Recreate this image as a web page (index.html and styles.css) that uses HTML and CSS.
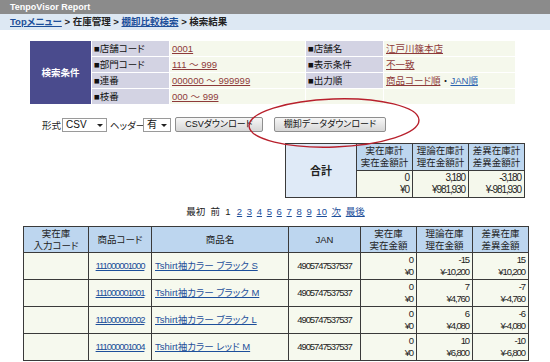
FILE: index.html
```html
<!DOCTYPE html>
<html lang="ja">
<head>
    <meta charset="UTF-8">
    <title>TenpoVisor Report</title>
    <link rel="stylesheet" href="styles.css">
</head>
<body>
    <div class="titlebar">TenpoVisor Report</div>
    <div class="crumbs">
        <a href="#">Topメニュー</a> &gt; 在庫管理 &gt; <a href="#">棚卸比較検索</a> &gt; 検索結果
    </div>

    <table class="cond">
        <tr>
            <th class="cond-head" rowspan="4">検索条件</th>
            <td class="cond-label">■店舗コード</td>
            <td class="cond-value"><a href="#">0001</a></td>
            <td class="cond-label">■店舗名</td>
            <td class="cond-value"><a href="#">江戸川篠本店</a></td>
        </tr>
        <tr>
            <td class="cond-label">■部門コード</td>
            <td class="cond-value"><a href="#">111 ～ 999</a></td>
            <td class="cond-label">■表示条件</td>
            <td class="cond-value"><a href="#">不一致</a></td>
        </tr>
        <tr>
            <td class="cond-label">■連番</td>
            <td class="cond-value"><a href="#">000000 ～ 999999</a></td>
            <td class="cond-label">■出力順</td>
            <td class="cond-value"><a href="#">商品コード順</a> ・ <a href="#" class="blue">JAN順</a></td>
        </tr>
        <tr>
            <td class="cond-label">■枝番</td>
            <td class="cond-value"><a href="#">000 ～ 999</a></td>
            <td class="cond-empty"></td>
            <td class="cond-value"></td>
        </tr>
    </table>

    <div class="export">
        <span class="lbl lbl-format">形式</span>
        <span class="pick pick-format"><select><option>CSV</option></select></span>
        <span class="lbl lbl-head">ヘッダー</span>
        <span class="pick pick-head"><select><option>有</option></select></span>
        <button class="btn btn-csv">CSVダウンロード</button>
        <button class="btn btn-data">棚卸データダウンロード</button>
        <svg class="mark" width="184" height="56" viewBox="0 0 184 56">
            <ellipse cx="92" cy="28" rx="85" ry="24" transform="rotate(-2 92 28)" fill="none" stroke="#b8202c" stroke-width="1.4"/>
        </svg>
    </div>

    <table class="totals">
        <tr>
            <th class="sum" rowspan="2">合計</th>
            <th>実在庫計<br>実在金額計</th>
            <th>理論在庫計<br>理在金額計</th>
            <th>差異在庫計<br>差異金額計</th>
        </tr>
        <tr>
            <td class="num">0<br>¥0</td>
            <td class="num">3,180<br>¥981,930</td>
            <td class="num">-3,180<br>¥-981,930</td>
        </tr>
    </table>

    <div class="pager">
        最初&nbsp;&nbsp;前&nbsp;&nbsp;1&nbsp;
        <a href="#">2</a> <a href="#">3</a> <a href="#">4</a> <a href="#">5</a> <a href="#">6</a>
        <a href="#">7</a> <a href="#">8</a> <a href="#">9</a> <a href="#">10</a>
        <a href="#">次</a> <a href="#">最後</a>
    </div>

    <table class="list">
        <tr>
            <th class="c-input">実在庫<br>入力コード</th>
            <th class="c-code">商品コード</th>
            <th class="c-name">商品名</th>
            <th class="c-jan">JAN</th>
            <th class="c-num">実在庫<br>実在金額</th>
            <th class="c-num">理論在庫<br>理在金額</th>
            <th class="c-num">差異在庫<br>差異金額</th>
        </tr>
        <tr>
            <td></td>
            <td class="code"><a href="#">111000001000</a></td>
            <td><a href="#">Tshirt袖カラー ブラック S</a></td>
            <td class="jan">4905747537537</td>
            <td class="num">0<br>¥0</td>
            <td class="num">-15<br>¥-10,200</td>
            <td class="num">15<br>¥10,200</td>
        </tr>
        <tr>
            <td></td>
            <td class="code"><a href="#">111000001001</a></td>
            <td><a href="#">Tshirt袖カラー ブラック M</a></td>
            <td class="jan">4905747537537</td>
            <td class="num">0<br>¥0</td>
            <td class="num">7<br>¥4,760</td>
            <td class="num">-7<br>¥-4,760</td>
        </tr>
        <tr>
            <td></td>
            <td class="code"><a href="#">111000001002</a></td>
            <td><a href="#">Tshirt袖カラー ブラック L</a></td>
            <td class="jan">4905747537537</td>
            <td class="num">0<br>¥0</td>
            <td class="num">6<br>¥4,080</td>
            <td class="num">-6<br>¥-4,080</td>
        </tr>
        <tr>
            <td></td>
            <td class="code"><a href="#">111000001004</a></td>
            <td><a href="#">Tshirt袖カラー レッド M</a></td>
            <td class="jan">4905747537537</td>
            <td class="num">0<br>¥0</td>
            <td class="num">10<br>¥6,800</td>
            <td class="num">-10<br>¥-6,800</td>
        </tr>
    </table>
</body>
</html>
```

FILE: styles.css
```css
body {
    margin: 0;
    font-family: "Liberation Sans", "Noto Sans CJK JP", sans-serif;
    font-size: 10px;
    font-feature-settings: "palt";
    color: #222;
    background: #fff;
}

a {
    color: #1d4f9a;
}

.titlebar {
    height: 14px;
    line-height: 14px;
    padding-left: 10px;
    background: #8b8b8b;
    color: #fff;
    font-weight: bold;
    font-size: 9px;
}

.crumbs {
    height: 16px;
    line-height: 16px;
    padding-left: 10px;
    background: #dde8f3;
    font-size: 9.5px;
    font-weight: bold;
    color: #222;
}

.crumbs a {
    color: #1d4f9a;
}

/* search conditions */
.cond {
    margin: 10px 0 0 29px;
    width: 487px;
    border-collapse: separate;
    border-spacing: 1px;
    background: #fff;
    table-layout: fixed;
}

.cond td, .cond th {
    height: 15px;
    padding: 0 2px;
    line-height: 14px;
    font-size: 9.5px;
}

.cond-head {
    width: 57px;
    background: #4a4b8d;
    color: #fff;
    font-size: 11px;
    font-weight: bold;
}

.cond-label {
    width: 73px;
    background: #d3d3e3;
    color: #111;
}

.cond-value {
    background: #f5f8ec;
}

.cond tr:first-child .cond-value:nth-child(3) {
    width: 131px;
}

.cond-empty {
    background: #f5f8ec;
}

.cond-value a {
    color: #8e3a3a;
}

.cond-value a.blue {
    color: #2c62b0;
}

/* export row */
.export {
    position: relative;
    display: flex;
    align-items: center;
    gap: 4px;
    margin: 12px 0 0 42px;
    height: 15px;
}

.lbl {
    display: inline-block;
    white-space: nowrap;
    font-size: 9.5px;
}

.lbl-format {
    width: 16px;
}

.lbl-head {
    width: 29px;
    margin-left: -1px;
}

.pick {
    position: relative;
    display: inline-block;
    height: 14px;
}

.pick select {
    appearance: none;
    display: block;
    height: 14px;
    border: 1px solid #9a9a9a;
    background: #fff;
    font-family: inherit;
    font-size: 10px;
    line-height: 12px;
    padding: 0 0 0 3px;
    color: #111;
    border-radius: 0;
}

.pick-format select {
    width: 45px;
}

.pick-head select {
    width: 28px;
}

.pick::after {
    content: "";
    position: absolute;
    right: 4px;
    top: 6px;
    border-left: 3px solid transparent;
    border-right: 3px solid transparent;
    border-top: 3px solid #222;
}

.btn {
    height: 15px;
    padding: 0;
    border: 1px solid #8e8e8e;
    border-radius: 2px;
    background: linear-gradient(#f7f7f7, #d6d6d6);
    font-family: inherit;
    font-size: 9px;
    font-feature-settings: "palt";
    line-height: 13px;
    color: #111;
}

.btn-csv {
    width: 88px;
}

.btn-data {
    width: 112px;
    margin-left: 7px;
}

.mark {
    position: absolute;
    left: 200px;
    top: -22px;
}

/* totals */
.totals {
    margin: 11px 0 0 285px;
    width: 238px;
    border-collapse: collapse;
    table-layout: fixed;
}

.totals th, .totals td {
    border: 1px solid #3a3a3a;
    line-height: 12px;
    padding: 0;
}

.totals th {
    height: 26px;
    background: #bdd6ef;
    font-weight: normal;
    font-size: 9.5px;
    width: 55px;
}

.totals th.sum {
    width: 70px;
    background: #dfeaf7;
    font-weight: bold;
    font-size: 11px;
}

.totals td {
    height: 26px;
    background: #f5f8ec;
}

.num {
    text-align: right;
    font-size: 10px;
    letter-spacing: -1.1px;
}

.totals td.num, .list td.num {
    padding: 0 3px 0 0;
}

/* pager */
.pager {
    margin: 8px 0 0;
    text-align: center;
    line-height: 12px;
    padding-left: 2px;
    font-size: 9.5px;
}

.pager a {
    margin: 0 1px;
}

/* list */
.list {
    margin: 8px 0 0 23px;
    width: 500px;
    border-collapse: collapse;
    table-layout: fixed;
}

.list th, .list td {
    border: 1px solid #3a3a3a;
    line-height: 12px;
    padding: 0;
}

.list th {
    height: 25px;
    background: #bdd6ef;
    font-weight: normal;
    font-size: 9.5px;
}

.list td {
    height: 26px;
    background: #f6f9ee;
    padding: 0 3px;
    font-size: 9.5px;
}

.c-input { width: 64px; }
.c-code { width: 62px; }
.c-name { width: 136px; }
.c-jan { width: 71px; }
.c-num { width: 55px; }

.code, .jan {
    text-align: center;
    font-size: 10px;
    letter-spacing: -1.1px;
}
```
